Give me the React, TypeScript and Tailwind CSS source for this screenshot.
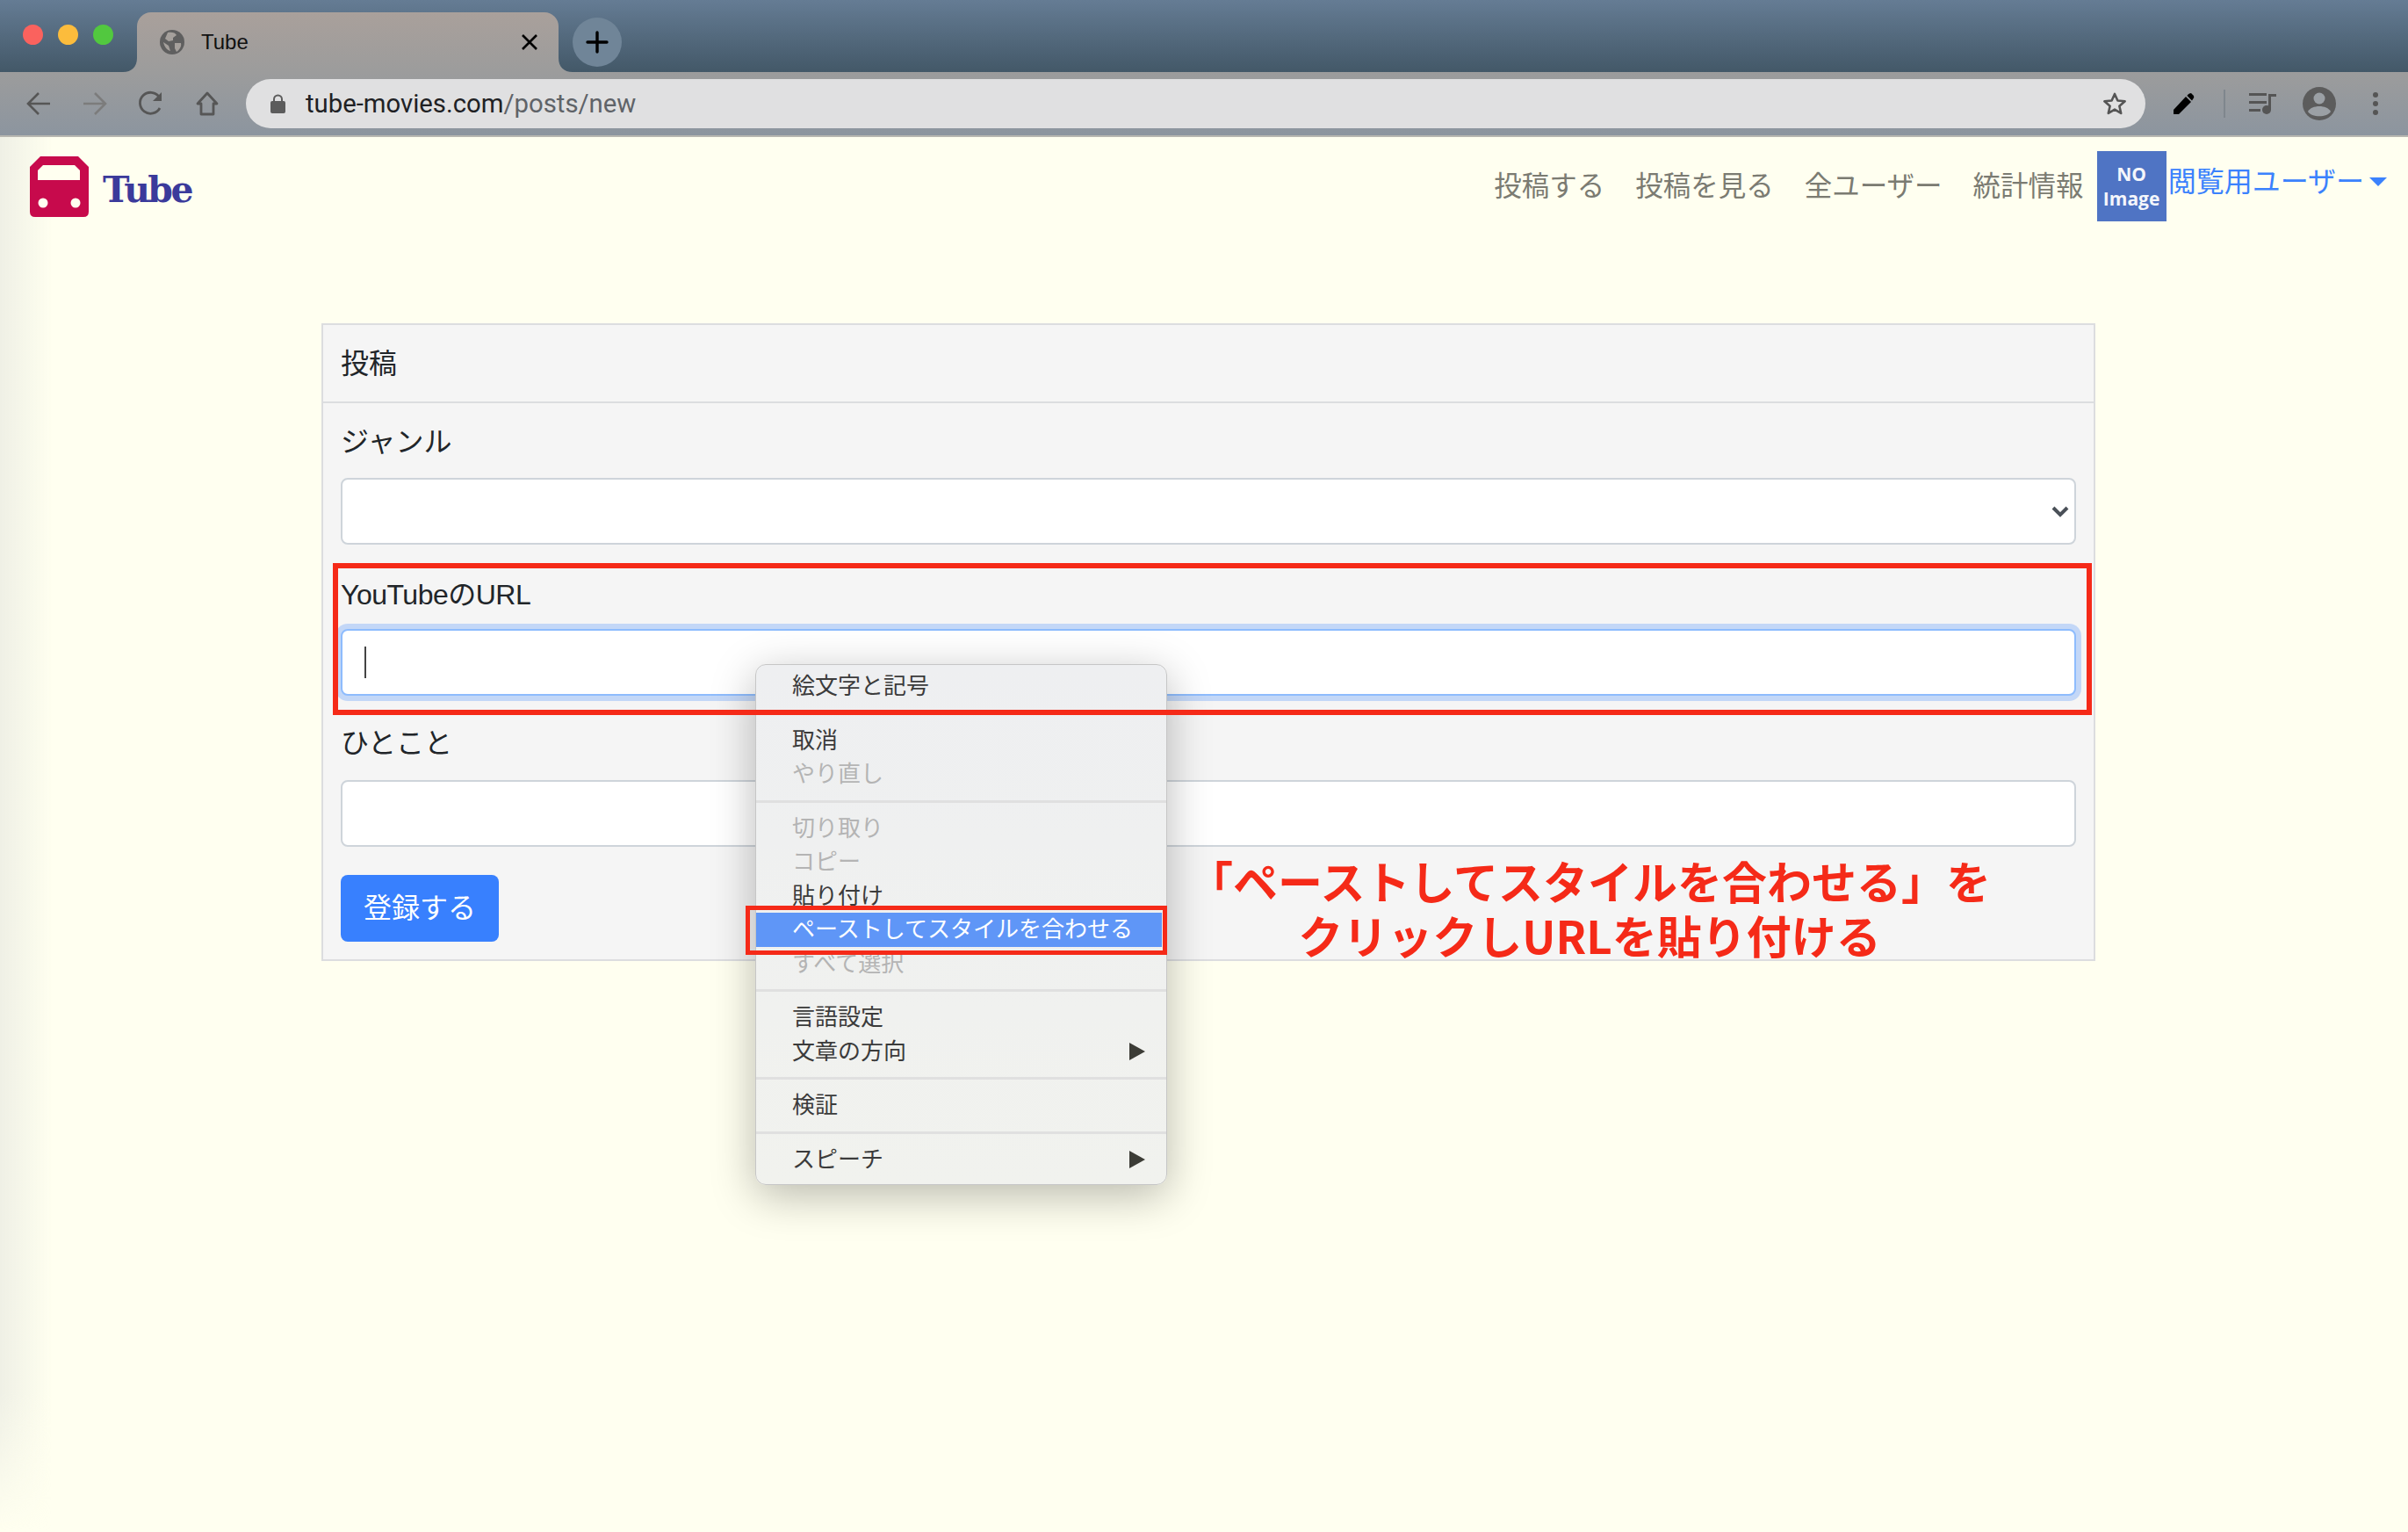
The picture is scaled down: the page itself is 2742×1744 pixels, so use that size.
import React from "react";

type MenuEntry = { label: string; disabled?: boolean; active?: boolean; arrow?: boolean } | "sep";

const menuEntries: MenuEntry[] = [
  { label: "絵文字と記号" },
  "sep",
  { label: "取消" },
  { label: "やり直し", disabled: true },
  "sep",
  { label: "切り取り", disabled: true },
  { label: "コピー", disabled: true },
  { label: "貼り付け" },
  { label: "ペーストしてスタイルを合わせる", active: true },
  { label: "すべて選択", disabled: true },
  "sep",
  { label: "言語設定" },
  { label: "文章の方向", arrow: true },
  "sep",
  { label: "検証" },
  "sep",
  { label: "スピーチ", arrow: true },
];

const navItems = ["投稿する", "投稿を見る", "全ユーザー", "統計情報"];

const TabFlare: React.FC<{ flip?: boolean }> = ({ flip }) => (
  <svg width="16" height="16" viewBox="0 0 16 16" className={flip ? "self-end -scale-x-100" : "self-end"}>
    <path d="M0 16 C10 16 16 10 16 0 V16 Z" fill="#9c9c9c" />
  </svg>
);

const BrowserChrome: React.FC = () => (
  <div className="flex flex-col">
    <div className="flex h-[82px] items-start bg-gradient-to-b from-[#657c94] to-[#435868]">
      <div className="flex w-[140px] shrink-0 items-center gap-[17px] pl-[26px] pt-[28px]">
        <span className="h-[23px] w-[23px] rounded-full bg-[#fa625e]" />
        <span className="h-[23px] w-[23px] rounded-full bg-[#fcbc3c]" />
        <span className="h-[23px] w-[23px] rounded-full bg-[#52c83f]" />
      </div>
      <div className="flex h-[82px] items-end">
        <TabFlare flip={false} />
      </div>
      <div className="mt-[14px] flex h-[68px] w-[480px] items-center rounded-t-[16px] bg-gradient-to-b from-[#a9a09b] to-[#9c9c9c] pl-[26px] pr-[22px]">
        <svg width="28" height="28" viewBox="0 0 28 28">
          <circle cx="14" cy="14" r="14" fill="#5f5f5f" />
          <path d="M9 3 C13 2 18 3 19 6 L15 9 L15 12 L10 13 L6 10 Z M17 15 L24 15 C25 19 22 23 19 25 L17 21 Z M4 14 L10 18 L12 24 C8 23 5 19 4 14 Z" fill="#a5a09c" />
        </svg>
        <span className="ml-[19px] text-[24px] leading-none text-[#111]">Tube</span>
        <svg width="22" height="22" viewBox="0 0 22 22" className="ml-auto">
          <path d="M3 3 L19 19 M19 3 L3 19" stroke="#000" strokeWidth="2.6" />
        </svg>
      </div>
      <div className="flex h-[82px] items-end">
        <TabFlare flip />
      </div>
      <div className="mt-[20px] flex h-[56px] w-[56px] items-center justify-center rounded-full bg-[#708598]">
        <svg width="28" height="28" viewBox="0 0 28 28">
          <path d="M14 3 V25 M3 14 H25" stroke="#000" strokeWidth="3.4" strokeLinecap="round" />
        </svg>
      </div>
    </div>
    <div className="flex h-[72px] items-center bg-gradient-to-b from-[#9c9c9c] to-[#8c959f]">
      <div className="flex w-[280px] shrink-0 items-center pl-[30px]">
        <svg width="28" height="28" viewBox="0 0 28 28" fill="none" stroke="#565656" strokeWidth="2.6">
          <path d="M27 14 H3 M14 2 L2 14 L14 26" />
        </svg>
        <svg width="28" height="28" viewBox="0 0 28 28" fill="none" stroke="#7c7c7c" strokeWidth="2.6" className="ml-[36px]">
          <path d="M1 14 H25 M14 2 L26 14 L14 26" />
        </svg>
        <svg width="30" height="30" viewBox="0 0 30 30" fill="none" stroke="#565656" strokeWidth="2.8" className="ml-[35px]">
          <path d="M25 20 A12 12 0 1 1 24 7" />
          <path d="M27 2 V12 H17 Z" fill="#565656" stroke="none" />
        </svg>
        <svg width="28" height="30" viewBox="0 0 28 30" fill="none" stroke="#565656" strokeWidth="2.8" className="ml-[35px]">
          <path d="M14 3 L25 15 H21 V27 H7 V15 H3 Z" strokeLinejoin="round" />
        </svg>
      </div>
      <div className="flex h-[56px] w-[2163px] shrink-0 items-center rounded-full bg-[#e0e0e1] pl-[28px] pr-[21px]">
        <svg width="17" height="22" viewBox="0 0 17 22">
          <rect x="0" y="8" width="17" height="14" rx="2" fill="#5c5c5c" />
          <path d="M4 9 V6 A4.5 4.5 0 0 1 13 6 V9" fill="none" stroke="#5c5c5c" strokeWidth="2" />
        </svg>
        <span className="ml-[23px] pt-[2px] font-['Roboto',sans-serif] text-[29.3px] leading-none text-[#202124]">
          tube-movies.com<span className="text-[#5f6368]">/posts/new</span>
        </span>
        <svg width="28" height="28" viewBox="0 0 24 24" fill="none" stroke="#555" strokeWidth="2.2" className="ml-auto">
          <path d="M12 2.5 L14.9 9 L22 9.7 L16.6 14.4 L18.2 21.4 L12 17.7 L5.8 21.4 L7.4 14.4 L2 9.7 L9.1 9 Z" strokeLinejoin="round" />
        </svg>
      </div>
      <div className="flex flex-1 items-center">
        <svg width="24" height="24" viewBox="0 0 24 24" className="ml-[32px]" fill="#000">
          <path d="M0 19 L14 4 L20 10 L6 24 H0 Z" />
          <path d="M16 2 Q18 0 20 0 L23 3 Q24 5 22 7 L21 8.5 L15.5 3 Z" />
        </svg>
        <div className="ml-[33px] h-[32px] w-[2px] bg-[#7f868d]" />
        <svg width="31" height="24" viewBox="0 0 31 24" className="ml-[27px]" fill="#555">
          <rect x="0" y="0" width="20" height="3" />
          <rect x="0" y="9" width="20" height="3" />
          <rect x="0" y="18" width="13" height="3" />
          <rect x="22" y="1" width="3" height="18" />
          <rect x="22" y="1" width="9" height="3" />
          <circle cx="20" cy="19" r="5" />
        </svg>
        <svg width="38" height="38" viewBox="0 0 38 38" className="ml-[30px]">
          <circle cx="19" cy="19" r="19" fill="#5c5c5c" />
          <circle cx="19" cy="13" r="6.5" fill="#9ba0a5" />
          <path d="M6 28 C10 20 28 20 32 28 C28 35 10 35 6 28 Z" fill="#9ba0a5" />
        </svg>
        <div className="ml-[42px] flex flex-col gap-[4px]">
          <span className="h-[6px] w-[6px] rounded-full bg-[#555]" />
          <span className="h-[6px] w-[6px] rounded-full bg-[#555]" />
          <span className="h-[6px] w-[6px] rounded-full bg-[#555]" />
        </div>
      </div>
    </div>
    <div className="h-[2px] bg-[#b7b7b0]" />
  </div>
);

const Navbar: React.FC = () => (
  <div className="relative flex h-[212px] items-start pl-[34px] pr-[24px]">
    <svg width="67" height="69" viewBox="0 0 67 69" className="mt-[22px]">
      <path d="M12 0 H55 L67 12 V63 Q67 69 61 69 H6 Q0 69 0 63 V12 Z" fill="#c70a4c" />
      <path d="M15 10 H51 L57 16 V27 H9 V16 Z" fill="#fffff0" />
      <circle cx="15" cy="53" r="5.5" fill="#fffff0" />
      <circle cx="52" cy="53" r="5.5" fill="#fffff0" />
    </svg>
    <span className="ml-[16px] mt-[30px] font-['DejaVu_Serif',serif] text-[41px] font-bold leading-[60px] tracking-[-2.6px] text-[#3b3a9b]">
      Tube
    </span>
    <nav className="ml-auto mt-[32px] flex gap-[35px]">
      {navItems.map((item) => (
        <a key={item} className="text-[31.5px] leading-[48px] text-[#7b7b72]">
          {item}
        </a>
      ))}
    </nav>
    <div className="ml-[15px] mt-[16px] flex h-[80px] w-[79px] flex-col items-center justify-center bg-[#4f74c4] font-['Open_Sans',sans-serif] text-[21px] font-bold leading-[28px] text-[#f4f6fb]">
      <span>NO</span>
      <span>Image</span>
    </div>
    <a className="ml-[2px] mt-[27px] text-[32px] leading-[48px] text-[#3b82fd]">閲覧用ユーザー</a>
    <span className="ml-[6px] mt-[46px] h-0 w-0 border-x-[10px] border-t-[10px] border-x-transparent border-t-[#3b82fd]" />
  </div>
);

const PostForm: React.FC = () => (
  <div className="relative ml-[366px] w-[2020px] border-2 border-[#dcdddf] bg-[#f5f5f5] text-[32px] text-[#212529]">
    <div className="flex h-[89px] items-center border-b-2 border-[#dcdddf] px-[20px] leading-[48px]">投稿</div>
    <div className="px-[20px] pb-[20px] pt-[20px]">
      <label className="block leading-[48px]">ジャンル</label>
      <div className="mt-[17px] flex h-[76px] items-center justify-end rounded-[8px] border-2 border-[#ced4da] bg-white pr-[6px]">
        <svg width="20" height="14" viewBox="0 0 20 14" fill="none" stroke="#4a5058" strokeWidth="4">
          <path d="M2 3 L10 11 L18 3" />
        </svg>
      </div>
      <label className="mt-[33px] block leading-[48px] tracking-[-0.5px]">YouTubeのURL</label>
      <div className="mt-[15px] flex h-[76px] items-center rounded-[8px] border-2 border-[#8ebcfd] bg-white pl-[25px] shadow-[0_0_0_6px_#c3d7f7]">
        <div className="h-[36px] w-[2px] bg-[#444]" />
      </div>
      <label className="mt-[30px] block leading-[48px]">ひとこと</label>
      <input className="mt-[18px] block h-[76px] w-full rounded-[8px] border-2 border-[#ced4da] bg-white" />
      <button className="mt-[32px] block h-[76px] w-[180px] rounded-[8px] bg-[#3880fe] text-[32px] leading-[48px] text-white">
        登録する
      </button>
    </div>
  </div>
);

const ContextMenu: React.FC = () => (
  <div className="absolute left-[860px] top-[756px] w-[469px] rounded-[12px] border border-[#c6c6c6] bg-gradient-to-b from-[#eeeff1] to-[#f1f2ee] pb-[9px] pt-[5px] text-[26px] shadow-[0_12px_50px_rgba(0,0,0,0.28)]">
    {menuEntries.map((entry, i) =>
      entry === "sep" ? (
        <div key={i} className="my-[10px] h-[3px] bg-[#e0e0e0]" />
      ) : (
        <div
          key={i}
          className={
            entry.active
              ? "mr-[5px] flex h-[38.5px] items-center bg-[#5f96f7] pl-[41px] leading-none text-white"
              : entry.disabled
                ? "flex h-[38.5px] items-center pl-[41px] leading-none text-[#b4b4b4]"
                : "flex h-[38.5px] items-center pl-[41px] leading-none text-[#3b3b3b]"
          }
        >
          {entry.label}
          {entry.arrow && (
            <span className="ml-auto mr-[24px] h-0 w-0 border-y-[10px] border-l-[18px] border-y-transparent border-l-[#3c3c36]" />
          )}
        </div>
      ),
    )}
  </div>
);

const App: React.FC = () => (
  <div className="relative h-[1744px] w-[2742px] overflow-hidden bg-[#fffff0] font-['Liberation_Sans','Noto_Sans_CJK_JP',sans-serif]">
    <div className="absolute bottom-0 left-0 top-[156px] w-[60px] bg-gradient-to-r from-[#eff0e5] to-transparent [mask-image:linear-gradient(to_bottom,black_90%,transparent)]" />
    <BrowserChrome />
    <Navbar />
    <PostForm />
    <ContextMenu />
    <div className="absolute left-[379px] top-[641px] h-[173px] w-[2003px] border-[6px] border-[#f52a18]" />
    <div className="absolute left-[849px] top-[1031px] h-[56px] w-[480px] border-[5px] border-[#f52a18]" />
    <div className="absolute left-[1310px] top-[971px] w-[1000px] text-center font-['Noto_Sans_CJK_JP',sans-serif] text-[51px] font-bold leading-[62px] text-[#f52a18]">
      <p>「ペーストしてスタイルを合わせる」を</p>
      <p>クリックしURLを貼り付ける</p>
    </div>
  </div>
);

export default App;
